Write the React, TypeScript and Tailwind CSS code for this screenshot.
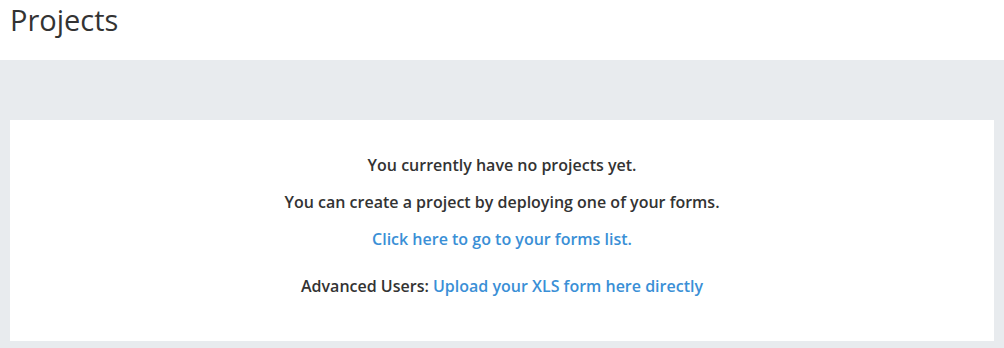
export default function App() {
  return (
    <div className="w-[1004px] h-[348px] bg-white font-['Open_Sans',sans-serif] text-[#333] overflow-hidden">
      <div className="h-[60px] px-[10px] pt-[0px]">
        <h1 className="text-[29px] leading-[40px] font-normal text-[#333]">Projects</h1>
      </div>
      <div className="h-[288px] bg-[#e8ebee] pt-[60px] px-[10px]">
        <div className="h-[221px] bg-white flex flex-col items-center pt-[34px] text-[16px] font-semibold">
          <p className="leading-[22px]">You currently have no projects yet.</p>
          <p className="leading-[22px] mt-[15px]">You can create a project by deploying one of your forms.</p>
          <p className="leading-[22px] mt-[15px]">
            <a className="text-[#3a8fd6]" href="#">Click here to go to your forms list.</a>
          </p>
          <p className="leading-[22px] mt-[25px]">
            Advanced Users: <a className="text-[#3a8fd6]" href="#">Upload your XLS form here directly</a>
          </p>
        </div>
      </div>
    </div>
  )
}
